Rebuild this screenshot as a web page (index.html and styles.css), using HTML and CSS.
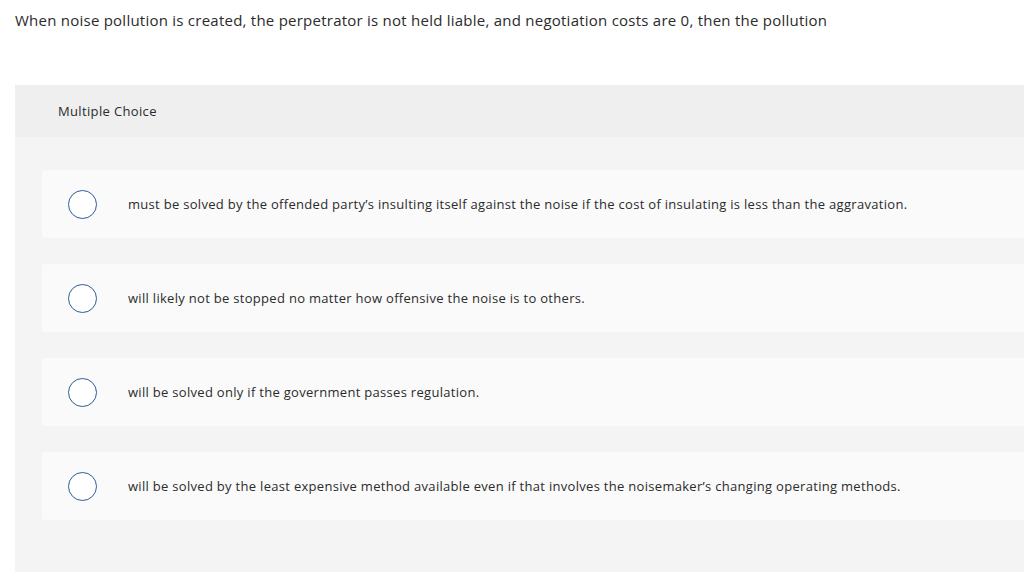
FILE: index.html
```html
<!DOCTYPE html>
<html>
<head>
<meta charset="utf-8">
<link rel="stylesheet" href="styles.css">
</head>
<body>
<div class="page">
  <p class="question">When noise pollution is created, the perpetrator is not held liable, and negotiation costs are 0, then the pollution</p>
  <section class="panel">
    <header class="panel-head">Multiple Choice</header>
    <div class="options">
      <label class="option"><span class="radio"></span><span class="text">must be solved by the offended party’s insulting itself against the noise if the cost of insulating is less than the aggravation.</span></label>
      <label class="option"><span class="radio"></span><span class="text">will likely not be stopped no matter how offensive the noise is to others.</span></label>
      <label class="option"><span class="radio"></span><span class="text">will be solved only if the government passes regulation.</span></label>
      <label class="option"><span class="radio"></span><span class="text">will be solved by the least expensive method available even if that involves the noisemaker’s changing operating methods.</span></label>
    </div>
  </section>
</div>
</body>
</html>
```

FILE: styles.css
```css
html, body {
  margin: 0;
  padding: 0;
  background: #ffffff;
  height: 100%;
}
body {
  font-family: "Open Sans", "Liberation Sans", sans-serif;
  color: #333333;
  overflow: hidden;
}
.page {
  padding: 10px 0 0 15px;
  height: 100%;
  box-sizing: border-box;
  display: flex;
  flex-direction: column;
}
.question {
  margin: 0;
  font-size: 15px;
  line-height: 20px;
  letter-spacing: 0.24px;
  color: #2b2b2b;
}
.panel {
  margin-top: 55px;
  background: #f4f4f4;
  flex: 1;
}
.panel-head {
  background: #efefef;
  height: 52px;
  display: flex;
  align-items: center;
  padding-left: 43px;
  font-size: 13px;
  letter-spacing: 0.35px;
  color: #2b2b2b;
}
.options {
  padding: 33px 0 0 27px;
  display: flex;
  flex-direction: column;
  gap: 26px;
}
.option {
  display: flex;
  align-items: center;
  height: 68px;
  background: #fafafa;
  border-radius: 2px 0 0 2px;
  padding-left: 26px;
}
.radio {
  box-sizing: border-box;
  width: 29px;
  height: 29px;
  border: 1.3px solid #2d5c98;
  border-radius: 50%;
  background: #ffffff;
  flex: none;
}
.text {
  margin-left: 31px;
  font-size: 13px;
  letter-spacing: 0.3px;
  color: #2b2b2b;
}
```
